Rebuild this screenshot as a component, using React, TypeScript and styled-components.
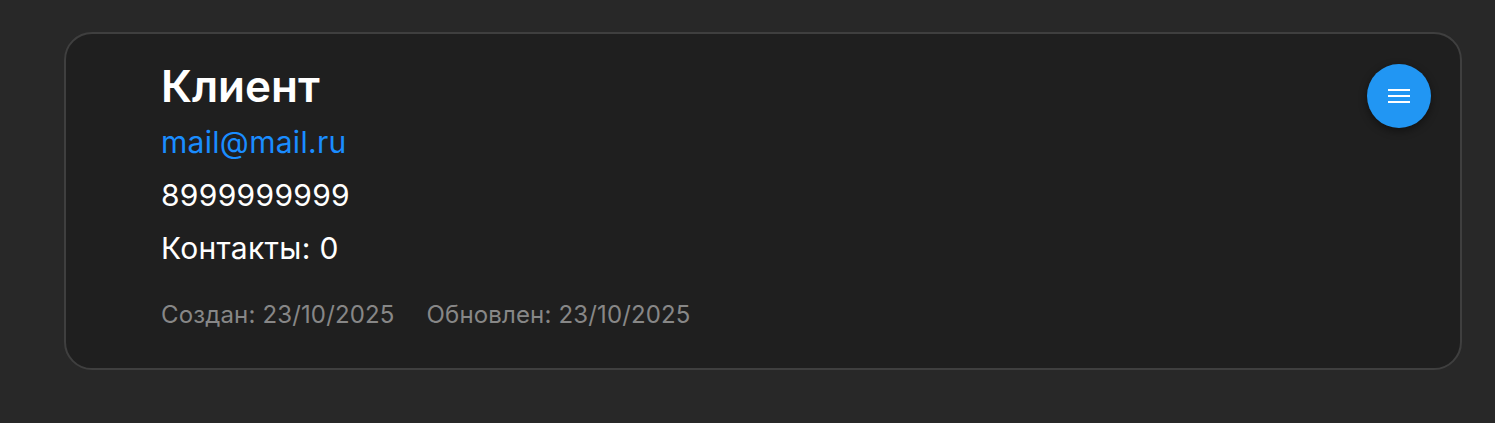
import React from "react";
import styled, { createGlobalStyle } from "styled-components";

const Global = createGlobalStyle`
  html, body { margin: 0; padding: 0; background: #282828; }
  body { font-family: Inter, "Noto Sans", sans-serif; }
`;

const Page = styled.div`
  padding: 32px 33px 0 64px;
`;

const Card = styled.div`
  position: relative;
  box-sizing: border-box;
  height: 338px;
  background: #1f1f1f;
  border: 2px solid #3f3f3f;
  border-radius: 28px;
  padding: 25px 32px 0 95px;
  display: flex;
  flex-direction: column;
`;

const Title = styled.h2`
  margin: 0;
  font-size: 44px;
  font-weight: 600;
  line-height: 54px;
  color: #fff;
`;

const Line = styled.div<{ $color?: string; $mt?: number }>`
  margin-top: ${(p) => p.$mt ?? 0}px;
  font-size: 30px;
  letter-spacing: 0.3px;
  line-height: 36px;
  color: ${(p) => p.$color ?? "#fff"};
`;

const Meta = styled.div`
  margin-top: 34px;
  display: flex;
  gap: 32px;
  font-size: 24px;
  letter-spacing: 0.15px;
  line-height: 30px;
  color: #878787;
`;

const Fab = styled.button`
  position: absolute;
  top: 30px;
  right: 29px;
  width: 64px;
  height: 64px;
  border-radius: 50%;
  border: none;
  background: #2196f3;
  box-shadow: 0 3px 8px rgba(0, 0, 0, 0.45);
  display: flex;
  align-items: center;
  justify-content: center;
  padding: 0;
`;

export default function App() {
  return (
    <>
      <Global />
      <Page>
        <Card>
          <Title>Клиент</Title>
          <Line $color="#1a8dff" $mt={11}>mail@mail.ru</Line>
          <Line $mt={17}>8999999999</Line>
          <Line $mt={17}>Контакты: 0</Line>
          <Meta>
            <span>Создан: 23/10/2025</span>
            <span>Обновлен: 23/10/2025</span>
          </Meta>
          <Fab aria-label="menu">
            <svg width="22" height="14" viewBox="0 0 22 14" fill="#fff">
              <rect x="0" y="0" width="22" height="2" />
              <rect x="0" y="6" width="22" height="2" />
              <rect x="0" y="12" width="22" height="2" />
            </svg>
          </Fab>
        </Card>
      </Page>
    </>
  );
}
